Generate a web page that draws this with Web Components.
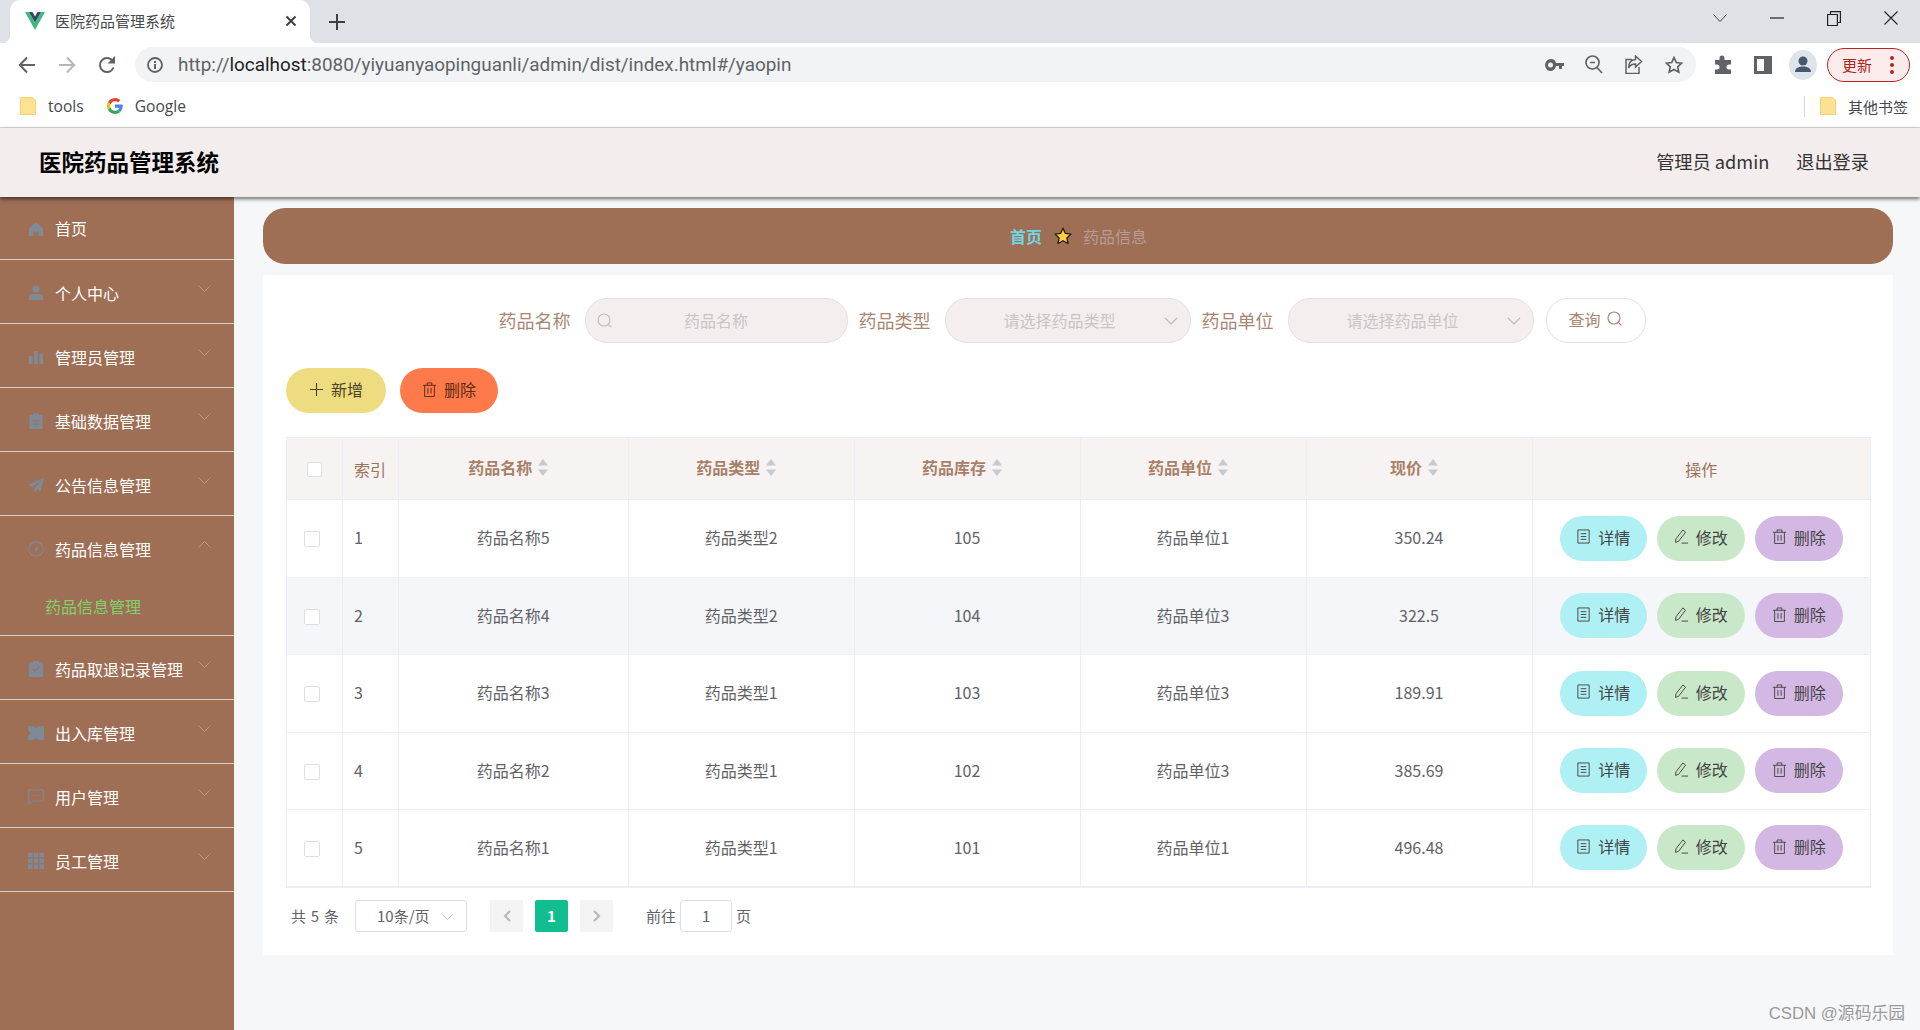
<!DOCTYPE html>
<html lang="zh">
<head>
<meta charset="utf-8">
<title>医院药品管理系统</title>
<style>
    html, body {
        margin: 0;
        height: 1030px;
        overflow: hidden;
        background: #f6f7f9;
        font-family: "Noto Sans CJK SC", "Liberation Sans", sans-serif;
    }
    .page {
        display: flex;
        height: 833px;
    }
    .main {
        flex: 1;
        padding: 11px 27px 0 29px;
        min-width: 0;
    }
</style>
</head>
<body>
<browser-chrome></browser-chrome>
<app-header title="医院药品管理系统" user="管理员 admin" logout="退出登录"></app-header>
<div class="page">
    <side-menu>
        <menu-item label="首页" icon="home" plain first></menu-item>
        <menu-item label="个人中心" icon="user"></menu-item>
        <menu-item label="管理员管理" icon="chart"></menu-item>
        <menu-item label="基础数据管理" icon="clip"></menu-item>
        <menu-item label="公告信息管理" icon="send"></menu-item>
        <menu-item label="药品信息管理" icon="compass" open>药品信息管理</menu-item>
        <menu-item label="药品取退记录管理" icon="check"></menu-item>
        <menu-item label="出入库管理" icon="ticket"></menu-item>
        <menu-item label="用户管理" icon="chat"></menu-item>
        <menu-item label="员工管理" icon="grid"></menu-item>
    </side-menu>
    <div class="main">
        <bread-bar home="首页" current="药品信息"></bread-bar>
        <content-card>
            <search-bar></search-bar>
            <tool-bar></tool-bar>
            <data-table></data-table>
            <page-nav></page-nav>
        </content-card>
    </div>
</div>
<water-mark>CSDN @源码乐园</water-mark>

<script>
const icons = {
    home: '<path fill="currentColor" d="M8 1 1 7.500V15h4.500v-4.500h5V15H15V7.500z"/>',
    user: '<circle fill="currentColor" cx="8" cy="4" r="3.600"/><path fill="currentColor" d="M1 15v-2.500C1 10 3.500 9 8 9s7 1 7 3.500V15z"/>',
    chart: '<path fill="currentColor" d="M1 7h3.500v8H1zM6.200 2h3.500v13H6.200zM11.500 5H15v10h-3.500z"/>',
    clip: '<path fill="currentColor" fill-rule="evenodd" d="M5 2V.5h6V2h3.500v14h-13V2zm-.5 5v1.200h7V7zm0 3.500v1.200h7v-1.200z"/>',
    send: '<path fill="currentColor" d="M16 .5 0 8l4.500 2L14 3 6.500 11v4.500l3-3 3 1.500z"/>',
    compass: '<circle fill="none" stroke="currentColor" stroke-width="1.200" cx="8" cy="8" r="7.200"/><path fill="currentColor" d="m10.500 4-1.200 5-2.800 3 1.200-5z"/>',
    check: '<path fill="currentColor" fill-rule="evenodd" d="M5 1.500V0h6v1.500h4V16H1V1.500zm-.5 7L7 11l4.800-4.800-1-1L7 9 5.400 7.500z"/>',
    ticket: '<path fill="currentColor" d="M0 1h5.500l2.500 2.500L10.500 1H16v14h-5.500L8 12.500 5.500 15H0v-3.500l2.500-3.500L0 4.500z"/>',
    chat: '<path fill="none" stroke="currentColor" stroke-width="1" d="M.8 1h14.400v11H4.500L.8 15z"/><path fill="currentColor" d="M4.500 6h1.200v1.200H4.500zM7.400 6h1.200v1.200H7.400zM10.300 6h1.200v1.200h-1.200z"/>',
    grid: '<path fill="currentColor" d="M0 0h4.500v4.500H0zM5.700 0h4.500v4.500H5.700zM11.500 0H16v4.500h-4.500zM0 5.700h4.500v4.500H0zM5.700 5.700h4.500v4.500H5.700zM11.500 5.700H16v4.500h-4.500zM0 11.500h4.500V16H0zM5.700 11.500h4.500V16H5.700zM11.500 11.500H16V16h-4.500z"/>',
    search: '<circle fill="none" stroke="currentColor" stroke-width="1.200" cx="7" cy="7" r="6"/><path fill="none" stroke="currentColor" stroke-width="1.200" d="m11.300 11.300 3 3"/>',
    plus: '<path fill="none" stroke="currentColor" stroke-width="1.200" d="M8 1v14M1 8h14"/>',
    trash: '<path fill="none" stroke="currentColor" stroke-width="1" d="M1 3.500h14M5.500 3.500V1h5v2.500M2.800 3.500V15.500h10.400V3.500M6.300 6.500v6M9.700 6.500v6"/>',
    doc: '<path fill="none" stroke="currentColor" stroke-width="1" d="M2 1h12v14H2zM5 5h6M5 8h6M5 11h6"/>',
    edit: '<path fill="none" stroke="currentColor" stroke-width="1" d="m9.500 1 2.800 2.400L5 13l-3.300 1.300.3-3.700zM8 15h7"/>'
};
const svg = (name, size, extra = '') =>
    `<svg width="${size}" height="${size}" viewBox="0 0 16 16" ${extra}>${icons[name]}</svg>`;

const chromeTemplate = document.createElement('template');
chromeTemplate.innerHTML = `
    <style>
        :host {
            display: block;
            height: 128px;
            font-family: "Noto Sans CJK SC", "Liberation Sans", sans-serif;
            color: #3c4043;
            box-sizing: border-box;
            border-bottom: 1px solid #d7d8da;
            background: #fff;
        }
        svg { display: block; }
        .strip {
            height: 43px;
            background: #dee1e6;
            display: flex;
            padding-left: 10px;
            align-items: flex-end;
        }
        .tab {
            width: 300px;
            height: 43px;
            box-sizing: border-box;
            background: #fff;
            border-radius: 10px 10px 0 0;
            display: flex;
            align-items: center;
            padding: 0 13px 2px 15px;
            font-size: 15px;
            position: relative;
        }
        .tab::before, .tab::after {
            content: '';
            position: absolute;
            bottom: 0;
            width: 8px;
            height: 8px;
        }
        .tab::before { left: -8px; background: radial-gradient(circle at 0 0, transparent 8px, #fff 8.5px); }
        .tab::after { right: -8px; background: radial-gradient(circle at 100% 0, transparent 8px, #fff 8.5px); }
        .tab .title { margin-left: 10px; flex: 1; color: #45494d; }
        .new { width: 54px; height: 43px; display: grid; place-items: center; }
        .spacer { flex: 1; }
        .win { width: 57px; height: 36px; align-self: flex-start; display: grid; place-items: center; }
        .win:last-child { width: 58px; }
        .bar {
            height: 43px;
            display: flex;
            align-items: center;
            padding: 0 10px 0 7px;
        }
        .btn { width: 40px; height: 35px; display: grid; place-items: center; flex: none; }
        .omni {
            margin: 0 7px 0 8px;
            height: 35px;
            flex: 1;
            background: #f1f3f4;
            border-radius: 18px;
            display: flex;
            align-items: center;
            padding: 0 2px 0 12px;
            min-width: 0;
        }
        .info { width: 20px; flex: none; }
        .url {
            flex: 1;
            margin-left: 11px;
            font: 18.9px Roboto, "Liberation Sans", sans-serif;
            color: #5f6368;
            white-space: nowrap;
        }
        .url b { font-weight: 400; color: #202124; }
        .update {
            margin-left: 4px;
            width: 83px;
            height: 34px;
            box-sizing: border-box;
            border: 1px solid #c5221f;
            border-radius: 17px;
            background: #fbeceb;
            color: #b3261e;
            font-size: 15px;
            display: flex;
            align-items: center;
            padding-left: 14px;
            flex: none;
        }
        .update svg { margin-left: 18px; }
        .marks {
            height: 42px;
            display: flex;
            align-items: center;
            padding: 0 12px 2px 20px;
            box-sizing: border-box;
            font-size: 15.6px;
            color: #45494d;
        }
        .marks .t { font-family: "Open Sans", "Noto Sans CJK SC", sans-serif; margin-left: 12px; }
        .marks .g { margin-left: 23px; }
        .marks .sep { width: 1px; height: 21px; background: #d5d7da; margin: 0 15px 0 auto; }
    </style>
    <div class="strip">
        <div class="tab">
            <svg width="20" height="18" viewBox="0 0 20 18"><path fill="#41b883" d="M0 0h4l6 10.500L16 0h4L10 18z"/><path fill="#35495e" d="M4 0h3.500L10 4.500 12.500 0H16l-6 10.500z"/></svg>
            <span class="title">医院药品管理系统</span>
            <svg width="12" height="12" viewBox="0 0 12 12"><path fill="none" stroke="#3c4043" stroke-width="2" d="m1.500 1.500 9 9m0-9-9 9"/></svg>
        </div>
        <div class="new"><svg width="16" height="16" viewBox="0 0 16 16"><path fill="none" stroke="#3c4043" stroke-width="2" d="M8 0v16M0 8h16"/></svg></div>
        <div class="spacer"></div>
        <div class="win"><svg width="14" height="8" viewBox="0 0 14 8"><path fill="none" stroke="#3c4043" d="m.5.500 6.500 7 6.500-7"/></svg></div>
        <div class="win"><svg width="14" height="2" viewBox="0 0 14 2"><path stroke="#222" stroke-width="1.200" d="M0 1h14"/></svg></div>
        <div class="win"><svg width="14" height="15" viewBox="0 0 14 15"><path fill="none" stroke="#222" stroke-width="1.200" d="M.6 3.500h9.800v11H.6zM3.500 3.500V.6h9.900v10.900h-3"/></svg></div>
        <div class="win"><svg width="14" height="14" viewBox="0 0 14 14"><path fill="none" stroke="#222" stroke-width="1.100" d="m.5.500 13 13m0-13-13 13"/></svg></div>
    </div>
    <div class="bar">
        <div class="btn"><svg width="18" height="18" viewBox="0 0 18 18"><path fill="none" stroke="#5f6368" stroke-width="2" d="M17 9H2M9 1.500 1.800 9 9 16.500"/></svg></div>
        <div class="btn"><svg width="18" height="18" viewBox="0 0 18 18"><path fill="none" stroke="#b5b8bb" stroke-width="2" d="M1 9h15M9 1.500 16.200 9 9 16.500"/></svg></div>
        <div class="btn"><svg width="18" height="18" viewBox="0 0 18 18"><path fill="none" stroke="#5f6368" stroke-width="2" d="M15.500 11.500A7 7 0 1 1 15 5.500"/><path fill="#5f6368" d="M17 0v7.500h-7.500z"/></svg></div>
        <div class="omni">
            <div class="info"><svg width="16" height="16" viewBox="0 0 16 16"><circle fill="none" stroke="#5f6368" stroke-width="1.800" cx="8" cy="8" r="7"/><path fill="#5f6368" d="M7 7h2v5H7zM7 4h2v2H7z"/></svg></div>
            <div class="url">http://<b>localhost</b>:8080/yiyuanyaopinguanli/admin/dist/index.html#/yaopin</div>
            <div class="btn"><svg width="19" height="12" viewBox="0 0 19 12"><path fill="#5f6368" fill-rule="evenodd" d="M5.500 0A5.500 6 0 0 1 11 4h8v3h-2v3h-3V7h-3a5.500 6 0 1 1-5.500-7zm0 3.500a2.500 2.500 0 1 0 0 5 2.500 2.500 0 0 0 0-5z"/></svg></div>
            <div class="btn"><svg width="18" height="19" viewBox="0 0 18 19"><circle fill="none" stroke="#5f6368" stroke-width="1.700" cx="7.500" cy="7.500" r="6.500"/><path stroke="#5f6368" stroke-width="1.700" d="m12 12.500 5 5.500M5 7.500h5"/></svg></div>
            <div class="btn"><svg width="18" height="19" viewBox="0 0 18 19"><path fill="none" stroke="#5f6368" stroke-width="1.500" d="M7 4.500H1v14h13V12M10.500 1l6 5.500-6 5.500V9C7 9 5 10 3.500 13c0-5 2-8 7-8.500z"/></svg></div>
            <div class="btn"><svg width="18" height="18" viewBox="0 0 18 18"><path fill="none" stroke="#5f6368" stroke-width="1.700" d="m9 1.500 2.300 5 5.400.6-4 3.700 1.100 5.400L9 13.500l-4.800 2.700 1.100-5.400-4-3.700 5.400-.6z"/></svg></div>
        </div>
        <div class="btn"><svg width="18" height="19" viewBox="0 0 18 19"><path fill="#5f6368" d="M1 5h4.500V3a2.500 2.500 0 0 1 5 0v2H17v4.500h-2a2.500 2.500 0 0 0 0 5h2V19H1v-4.500h2a2.500 2.500 0 0 0 0-5H1z"/></svg></div>
        <div class="btn"><svg width="18" height="18" viewBox="0 0 18 18"><path fill="#5f6368" fill-rule="evenodd" d="M0 0h18v18H0zm3 3v12h7V3z"/></svg></div>
        <div class="btn"><svg width="28" height="30" viewBox="0 0 28 30"><ellipse fill="#dfe3ea" cx="14" cy="15" rx="14" ry="15"/><circle fill="#45586e" cx="14" cy="11" r="4.500"/><path fill="#45586e" d="M6 22c0-4 4-5.500 8-5.500s8 1.500 8 5.500z"/></svg></div>
        <div class="update">更新<svg width="4" height="18" viewBox="0 0 4 18"><circle fill="#b3261e" cx="2" cy="2" r="2"/><circle fill="#b3261e" cx="2" cy="9" r="2"/><circle fill="#b3261e" cx="2" cy="16" r="2"/></svg></div>
    </div>
    <div class="marks">
        <svg width="16" height="18" viewBox="0 0 16 18"><path fill="#fde293" stroke="#f3d26f" d="M.5.500h12l3 3v14H.5z"/></svg>
        <span class="t">tools</span>
        <svg class="g" width="16" height="16" viewBox="0 0 16 16"><path fill="#ea4335" d="M8 3.200c1.200 0 2.200.4 3 1.200l2.300-2.300A8 8 0 0 0 .9 4.300l2.600 2A4.800 4.800 0 0 1 8 3.200z"/><path fill="#4285f4" d="M15.700 8.200c0-.6 0-1.100-.2-1.600H8v3.100h4.300a3.700 3.700 0 0 1-1.600 2.400l2.500 1.900a7.800 7.800 0 0 0 2.500-5.800z"/><path fill="#fbbc05" d="M3.500 9.600a4.800 4.800 0 0 1 0-3.300L.9 4.300a8 8 0 0 0 0 7.300z"/><path fill="#34a853" d="M8 16c2.200 0 4-.7 5.200-2l-2.500-1.900c-.7.500-1.600.8-2.700.8a4.800 4.800 0 0 1-4.500-3.300l-2.600 2A8 8 0 0 0 8 16z"/></svg>
        <span class="t">Google</span>
        <div class="sep"></div>
        <svg width="16" height="18" viewBox="0 0 16 18"><path fill="#fde293" stroke="#f3d26f" d="M.5.500h12l3 3v14H.5z"/></svg>
        <span class="t" style="font-family:'Noto Sans CJK SC',sans-serif;font-size:15px">其他书签</span>
    </div>
`;
class BrowserChrome extends HTMLElement {
    constructor() {
        super();
        this.attachShadow({ mode: 'open' }).appendChild(chromeTemplate.content.cloneNode(true));
    }
}
customElements.define('browser-chrome', BrowserChrome);

class AppHeader extends HTMLElement {
    constructor() {
        super();
        this.attachShadow({ mode: 'open' });
    }
    connectedCallback() {
        this.shadowRoot.innerHTML = `
            <style>
                :host {
                    display: flex;
                    position: relative;
                    z-index: 2;
                    height: 69px;
                    box-sizing: border-box;
                    align-items: center;
                    background: #f3eded;
                    box-shadow: 0 2px 4px rgba(0, 0, 0, .55);
                    padding: 0 51px 3px 39px;
                    color: #333;
                    font-size: 18.2px;
                }
                h1 { margin: 0 auto 0 0; font-size: 22.5px; color: #000; font-weight: 700; }
                span + span { margin-left: 27px; }
            </style>
            <h1>${this.getAttribute('title')}</h1>
            <span>${this.getAttribute('user')}</span>
            <span>${this.getAttribute('logout')}</span>
        `;
    }
}
customElements.define('app-header', AppHeader);

const sideTemplate = document.createElement('template');
sideTemplate.innerHTML = `
    <style>
        :host {
            display: block;
            width: 234px;
            flex: none;
            background: #9e6e55;
        }
    </style>
    <slot></slot>
`;
class SideMenu extends HTMLElement {
    constructor() {
        super();
        this.attachShadow({ mode: 'open' }).appendChild(sideTemplate.content.cloneNode(true));
    }
}
customElements.define('side-menu', SideMenu);

class MenuItem extends HTMLElement {
    constructor() {
        super();
        this.attachShadow({ mode: 'open' });
    }
    connectedCallback() {
        const open = this.hasAttribute('open');
        const arrow = this.hasAttribute('plain') ? '' : `
            <svg class="arrow" width="13" height="7" viewBox="0 0 13 7"><path fill="none" stroke="#b6978a" d="${open ? 'm.5 6.500 6-6 6 6' : 'm.5.500 6 6 6-6'}"/></svg>`;
        this.shadowRoot.innerHTML = `
            <style>
                :host {
                    display: block;
                    box-sizing: border-box;
                    border-bottom: 1px solid #d9cbcd;
                    color: #fff;
                    font-size: 16px;
                }
                .row {
                    height: 63px;
                    display: flex;
                    align-items: center;
                    padding: 3px 0 0 28px;
                    box-sizing: border-box;
                    position: relative;
                }
                :host([first]) .row { height: 62px; padding-top: 0; }
                .ico { width: 16px; height: 16px; color: #7f8a98; margin-top: -1px; }
                :host([first]) .ico { margin-top: 1px; }
                .label { margin-left: 11px; white-space: nowrap; }
                .arrow { position: absolute; right: 23px; top: 25px; }
                .sub {
                    display: none;
                    height: 56px;
                    padding-left: 45px;
                    line-height: 54px;
                    color: #7fd36c;
                }
                :host([open]) .sub { display: block; }
            </style>
            <div class="row">
                ${svg(this.getAttribute('icon'), 16, 'class="ico"')}
                <span class="label">${this.getAttribute('label')}</span>
                ${arrow}
            </div>
            <div class="sub"><slot></slot></div>
        `;
    }
}
customElements.define('menu-item', MenuItem);

class BreadBar extends HTMLElement {
    constructor() {
        super();
        this.attachShadow({ mode: 'open' });
    }
    connectedCallback() {
        this.shadowRoot.innerHTML = `
            <style>
                :host {
                    display: flex;
                    height: 56px;
                    box-sizing: border-box;
                    align-items: center;
                    justify-content: center;
                    padding: 0 0 1px 1px;
                    background: #9e6e55;
                    border-radius: 22px;
                    font-size: 16px;
                }
                .home { color: #6fd6e2; font-weight: 700; }
                .now { color: #b89c98; }
                svg { margin: 1px 11px 0 12px; }
            </style>
            <span class="home">${this.getAttribute('home')}</span>
            <svg width="18" height="18" viewBox="0 0 18 18"><path fill="#fbcf3e" stroke="#2a1a10" stroke-width="1.300" stroke-linejoin="round" d="m9 1.200 2.400 5.200 5.600.7-4.100 3.800 1.100 5.600L9 13.700l-5 2.800 1.100-5.600L1 7.100l5.600-.7z"/></svg>
            <span class="now">${this.getAttribute('current')}</span>
        `;
    }
}
customElements.define('bread-bar', BreadBar);

const cardTemplate = document.createElement('template');
cardTemplate.innerHTML = `
    <style>
        :host {
            display: block;
            margin-top: 11px;
            height: 680px;
            box-sizing: border-box;
            background: #fff;
            padding: 23px 22px 0 23px;
        }
    </style>
    <slot></slot>
`;
class ContentCard extends HTMLElement {
    constructor() {
        super();
        this.attachShadow({ mode: 'open' }).appendChild(cardTemplate.content.cloneNode(true));
    }
}
customElements.define('content-card', ContentCard);

class SearchBar extends HTMLElement {
    constructor() {
        super();
        this.attachShadow({ mode: 'open' });
        const chevron = '<svg class="chev" width="14" height="8" viewBox="0 0 14 8"><path fill="none" stroke="#bdb8ba" stroke-width="1.200" d="m1 1 6 6 6-6"/></svg>';
        this.shadowRoot.innerHTML = `
            <style>
                :host {
                    display: flex;
                    height: 45px;
                    align-items: center;
                    justify-content: center;
                    padding-right: 13px;
                    font-size: 18px;
                    color: #a98671;
                }
                .label { margin: 0 14px 2px 0; white-space: nowrap; }
                .field {
                    height: 45px;
                    box-sizing: border-box;
                    border: 1px solid #e6e0e2;
                    border-radius: 22px;
                    background: #f5eeee;
                    color: #c9c4c6;
                    font-size: 16px;
                    display: flex;
                    align-items: center;
                    justify-content: center;
                    position: relative;
                    margin-right: 11px;
                    padding-bottom: 2px;
                }
                .input { width: 263px; }
                .select { width: 246px; padding-right: 16px; }
                .search { position: absolute; left: 11px; top: 14px; color: #c3bfc1; }
                .chev { position: absolute; right: 12px; top: 18px; }
                .query {
                    width: 100px;
                    height: 45px;
                    margin-left: 1px;
                    box-sizing: border-box;
                    border: 1px solid #e6e0e2;
                    border-radius: 22px;
                    background: #fff;
                    font-size: 16px;
                    display: flex;
                    align-items: center;
                    justify-content: center;
                    gap: 6px;
                    padding-bottom: 4px;
                }
            </style>
            <span class="label">药品名称</span>
            <div class="field input">${svg('search', 16, 'class="search"')}<span>药品名称</span></div>
            <span class="label">药品类型</span>
            <div class="field select"><span>请选择药品类型</span>${chevron}</div>
            <span class="label">药品单位</span>
            <div class="field select"><span>请选择药品单位</span>${chevron}</div>
            <div class="query"><span>查询</span>${svg('search', 16)}</div>
        `;
    }
}
customElements.define('search-bar', SearchBar);

class PillButton extends HTMLElement {
    constructor() {
        super();
        this.attachShadow({ mode: 'open' });
    }
    connectedCallback() {
        this.shadowRoot.innerHTML = `
            <style>
                :host {
                    display: inline-flex;
                    height: 45px;
                    align-items: center;
                    justify-content: center;
                    gap: 7px;
                    border-radius: 23px;
                    box-sizing: border-box;
                    font-size: 16px;
                    color: #444;
                    background: var(--fill);
                    width: var(--w);
                    padding-bottom: 3px;
                    white-space: nowrap;
                }
                svg { flex: none; }
            </style>
            ${svg(this.getAttribute('icon'), 15)}
            <span><slot></slot></span>
        `;
    }
}
customElements.define('pill-button', PillButton);

class ToolBar extends HTMLElement {
    constructor() {
        super();
        this.attachShadow({ mode: 'open' });
        this.shadowRoot.innerHTML = `
            <style>
                :host { display: flex; gap: 14px; margin-top: 25px; }
                .add { --fill: #eedd80; --w: 100px; color: #4a4226; }
                .del { --fill: #ff7a4a; --w: 98px; color: #5b2a14; }
            </style>
            <pill-button class="add" icon="plus">新增</pill-button>
            <pill-button class="del" icon="trash">删除</pill-button>
        `;
    }
}
customElements.define('tool-bar', ToolBar);

const rows = [
    [1, '药品名称5', '药品类型2', 105, '药品单位1', '350.24'],
    [2, '药品名称4', '药品类型2', 104, '药品单位3', '322.5'],
    [3, '药品名称3', '药品类型1', 103, '药品单位3', '189.91'],
    [4, '药品名称2', '药品类型1', 102, '药品单位3', '385.69'],
    [5, '药品名称1', '药品类型1', 101, '药品单位1', '496.48']
];
const sortCaret = '<svg class="caret" width="10" height="17" viewBox="0 0 10 17"><path fill="#c5c9d0" d="M5 0l5 6.500H0zM5 17 0 10.500h10z"/></svg>';

class DataTable extends HTMLElement {
    constructor() {
        super();
        this.attachShadow({ mode: 'open' });
        const heads = ['药品名称', '药品类型', '药品库存', '药品单位', '现价']
            .map(h => `<div class="th sort"><span>${h}</span>${sortCaret}</div>`).join('');
        const body = rows.map((r, i) => `
            <div class="tr${i === 1 ? ' alt' : ''}">
                <div class="td"><i class="box body"></i></div>
                <div class="td idx">${r[0]}</div>
                ${r.slice(1).map(c => `<div class="td">${c}</div>`).join('')}
                <div class="td ops">
                    <pill-button class="a" icon="doc">详情</pill-button>
                    <pill-button class="b" icon="edit">修改</pill-button>
                    <pill-button class="c" icon="trash">删除</pill-button>
                </div>
            </div>`).join('');
        this.shadowRoot.innerHTML = `
            <style>
                :host {
                    display: block;
                    margin-top: 24px;
                    border: 1px solid #ebeef5;
                    border-bottom-width: 2px;
                    font-size: 16px;
                    color: #606266;
                }
                .tr {
                    display: grid;
                    grid-template-columns: 56px 55.5px 230.500px 225.500px 226px 226px 226px 1fr;
                    height: 77.500px;
                    border-bottom: 1px solid #ebeef5;
                    box-sizing: border-box;
                }
                .tr:last-child { border-bottom: 0; height: 75.500px; }
                .head { height: 62px; background: #f7f3f2; color: #a98068; font-weight: 700; }
                .alt { background: #f5f6fa; }
                .th, .td {
                    display: flex;
                    align-items: center;
                    justify-content: center;
                    gap: 6px;
                    border-right: 1px solid #ebeef5;
                    box-sizing: border-box;
                    min-width: 0;
                    padding-bottom: 2px;
                }
                .th:last-child, .td:last-child { border-right: 0; }
                .sort { padding: 0 10px 3px 0; }
                .plain { font-weight: 400; color: #9c7359; padding-bottom: 0; }
                .idx { justify-content: flex-start; padding-left: 11px; }
                .box {
                    display: block;
                    width: 15px;
                    height: 15px;
                    box-sizing: border-box;
                    border: 1px solid #dcdfe6;
                    border-radius: 2px;
                    background: #fff;
                    margin-top: 4px;
                }
                .box.body { width: 16px; height: 16px; margin-right: 5px; }
                .ops { gap: 10px; padding: 0; }
                .a { --fill: #aef0f3; --w: 87px; }
                .b { --fill: #c9e8ca; --w: 88px; }
                .c { --fill: #d4b8e4; --w: 88px; }
            </style>
            <div class="tr head">
                <div class="th"><i class="box"></i></div>
                <div class="th idx plain">索引</div>
                ${heads}
                <div class="th plain">操作</div>
            </div>
            ${body}
        `;
    }
}
customElements.define('data-table', DataTable);

class PageNav extends HTMLElement {
    constructor() {
        super();
        this.attachShadow({ mode: 'open' });
        this.shadowRoot.innerHTML = `
            <style>
                :host {
                    display: flex;
                    height: 32px;
                    margin-top: 12px;
                    padding-left: 5px;
                    align-items: center;
                    font-size: 15px;
                    color: #606266;
                    white-space: nowrap;
                }
                .total { word-spacing: 1.5px; }
                .size {
                    width: 112px;
                    height: 32px;
                    margin: 0 23px 0 16px;
                    box-sizing: border-box;
                    border: 1px solid #dcdfe6;
                    border-radius: 3px;
                    display: flex;
                    align-items: center;
                    padding-left: 21px;
                    position: relative;
                }
                .size svg { position: absolute; right: 13px; top: 13px; }
                .pg {
                    width: 33px;
                    height: 32px;
                    margin-right: 12px;
                    background: #f4f4f5;
                    border-radius: 2px;
                    display: grid;
                    place-items: center;
                }
                .pg.on { background: #10be90; color: #fff; font-weight: 700; }
                .go { margin: 0 4px 0 21px; }
                .num {
                    width: 52px;
                    height: 32px;
                    box-sizing: border-box;
                    border: 1px solid #dcdfe6;
                    border-radius: 3px;
                    display: grid;
                    place-items: center;
                    margin-right: 4px;
                }
            </style>
            <span class="total">共 5 条</span>
            <div class="size"><span>10条/页</span><svg width="11" height="6" viewBox="0 0 11 6"><path fill="none" stroke="#c0c4cc" d="m.5.500 5 5 5-5"/></svg></div>
            <div class="pg"><svg width="8" height="12" viewBox="0 0 8 12"><path fill="none" stroke="#b4b6bb" stroke-width="2" d="M7 1 2 6l5 5"/></svg></div>
            <div class="pg on">1</div>
            <div class="pg"><svg width="8" height="12" viewBox="0 0 8 12"><path fill="none" stroke="#b4b6bb" stroke-width="2" d="m1 1 5 5-5 5"/></svg></div>
            <span class="go">前往</span>
            <div class="num">1</div>
            <span>页</span>
        `;
    }
}
customElements.define('page-nav', PageNav);

const markTemplate = document.createElement('template');
markTemplate.innerHTML = `
    <style>
        :host {
            position: absolute;
            right: 15px;
            top: 1000px;
            font: 16.8px "Liberation Sans", "Noto Sans CJK SC", sans-serif;
            color: #9a9a9a;
            z-index: 3;
        }
    </style>
    <slot></slot>
`;
class WaterMark extends HTMLElement {
    constructor() {
        super();
        this.attachShadow({ mode: 'open' }).appendChild(markTemplate.content.cloneNode(true));
    }
}
customElements.define('water-mark', WaterMark);
</script>
</body>
</html>
